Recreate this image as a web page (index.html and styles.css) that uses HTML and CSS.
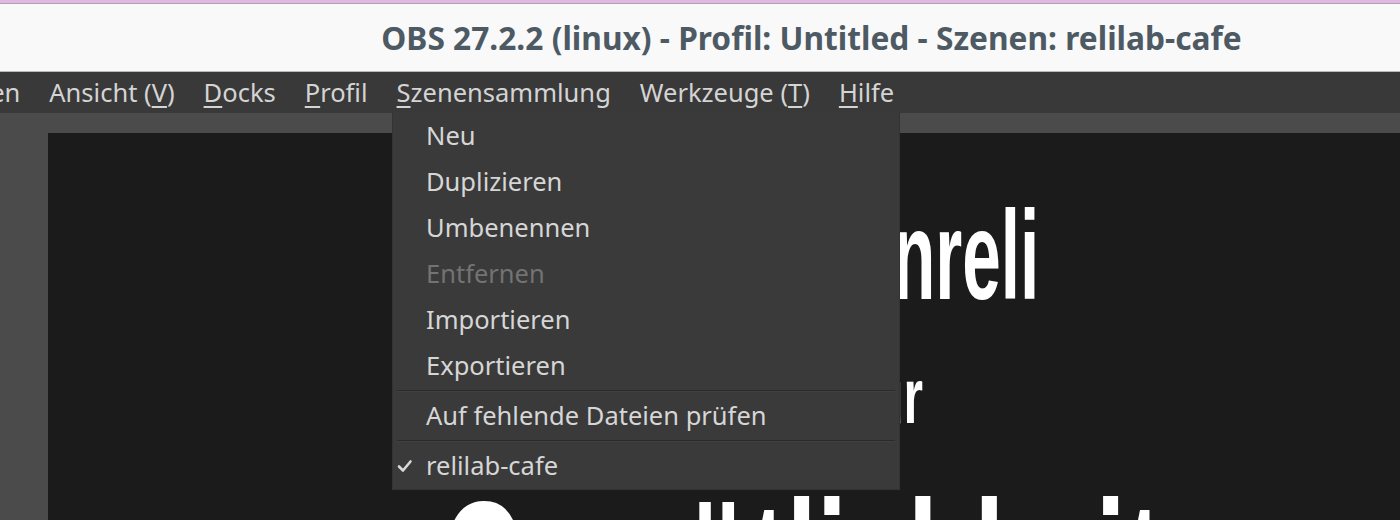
FILE: index.html
```html
<!DOCTYPE html>
<html lang="de">
<head>
  <meta charset="UTF-8">
  <title>OBS 27.2.2 (linux)</title>
  <link rel="stylesheet" href="styles.css">
</head>
<body>
  <div class="frame-top"></div>

  <header class="titlebar">
    <span class="title">OBS 27.2.2 (linux) - Profil: Untitled - Szenen: relilab-cafe</span>
  </header>

  <nav class="menubar">
    <span class="menu first"><u>B</u>earbeiten</span>
    <span class="menu">Ansicht (<u>V</u>)</span>
    <span class="menu"><u>D</u>ocks</span>
    <span class="menu"><u>P</u>rofil</span>
    <span class="menu open"><u>S</u>zenensammlung</span>
    <span class="menu">Werkzeuge (<u>T</u>)</span>
    <span class="menu"><u>H</u>ilfe</span>
  </nav>

  <main class="workspace">
    <div class="preview">
      <!-- the slide shown in the OBS preview -->
      <div class="line line-1">Lehrerinnenreli</div>
      <div class="line line-2">Raum für</div>
      <div class="line line-3">Gemütlichkeit</div>
    </div>

    <div class="dropdown">
      <div class="item">Neu</div>
      <div class="item">Duplizieren</div>
      <div class="item">Umbenennen</div>
      <div class="item disabled">Entfernen</div>
      <div class="item">Importieren</div>
      <div class="item">Exportieren</div>
      <div class="separator"></div>
      <div class="item">Auf fehlende Dateien prüfen</div>
      <div class="separator"></div>
      <div class="item checked">
        <svg class="check" width="16" height="14" viewBox="0 0 16 14">
          <path d="M2 7.5 L6 11.5 L13.5 2.5" fill="none" stroke="#d8d8d8" stroke-width="2.6" stroke-linecap="round" stroke-linejoin="round"/>
        </svg>
        relilab-cafe
      </div>
    </div>
  </main>
</body>
</html>
```

FILE: styles.css
```css
html, body {
  margin: 0;
  height: 100%;
}

body {
  width: 1400px;
  height: 520px;
  overflow: hidden;
  background: #1b1b1b;
  font-family: 'Noto Sans', 'DejaVu Sans', sans-serif;
  display: flex;
  flex-direction: column;
}

.frame-top {
  height: 3px;
  background: #e2b8e2;
  border-bottom: 1px solid #a8a8a8;
}

.titlebar {
  height: 67px;
  background: #f9f9f9;
  border-bottom: 1px solid #b9b9b9;
  display: flex;
  align-items: center;
  justify-content: center;
  padding-left: 223px;
}

.title {
  font-size: 31.7px;
  font-weight: bold;
  color: #4d5a64;
  margin-top: -1px;
}

.menubar {
  height: 41px;
  background: #393939;
  display: flex;
  align-items: center;
  white-space: nowrap;
}

.menu {
  font-size: 25.5px;
  color: #d4d4d4;
  padding: 0 14.5px;
  line-height: 43px;
}

.menu.first {
  margin-left: -126px;
}

.menu u {
  text-decoration-thickness: 2px;
  text-underline-offset: 4px;
}

.workspace {
  flex: 1;
  position: relative;
  background: #4b4b4b;
  padding: 20px 0 0 48px;
  display: flex;
}

.preview {
  flex: 1;
  position: relative;
  background: #1b1b1b;
  overflow: hidden;
}

.line {
  position: absolute;
  text-align: right;
  font-family: 'Liberation Sans', Arial, sans-serif;
  font-weight: bold;
  color: #fff;
  line-height: 1;
  white-space: nowrap;
  transform-origin: right center;
}

.line-1 {
  top: 60px;
  right: 361px;
  font-size: 126px;
  transform: scaleX(0.55);
}

.line-2 {
  top: 225px;
  right: 477px;
  font-size: 77px;
  transform: scaleX(0.65);
}

.line-3 {
  top: 340px;
  right: 238px;
  font-size: 188px;
  transform: scaleX(0.58);
}

.dropdown {
  position: absolute;
  left: 392px;
  top: 0;
  width: 508px;
  background: #3a3a3a;
  box-sizing: border-box;
  border: 1px solid #333;
  border-top: none;
}

.item {
  height: 46px;
  line-height: 45px;
  padding-left: 33px;
  font-size: 25.5px;
  color: #d6d6d6;
  position: relative;
  white-space: nowrap;
}

.item.disabled {
  color: #737373;
}

.check {
  position: absolute;
  left: 4px;
  top: 16px;
}

.separator {
  margin: 1px 4px;
  height: 1px;
  background: #2a2a2a;
  border-bottom: 1px solid #414141;
}
```
